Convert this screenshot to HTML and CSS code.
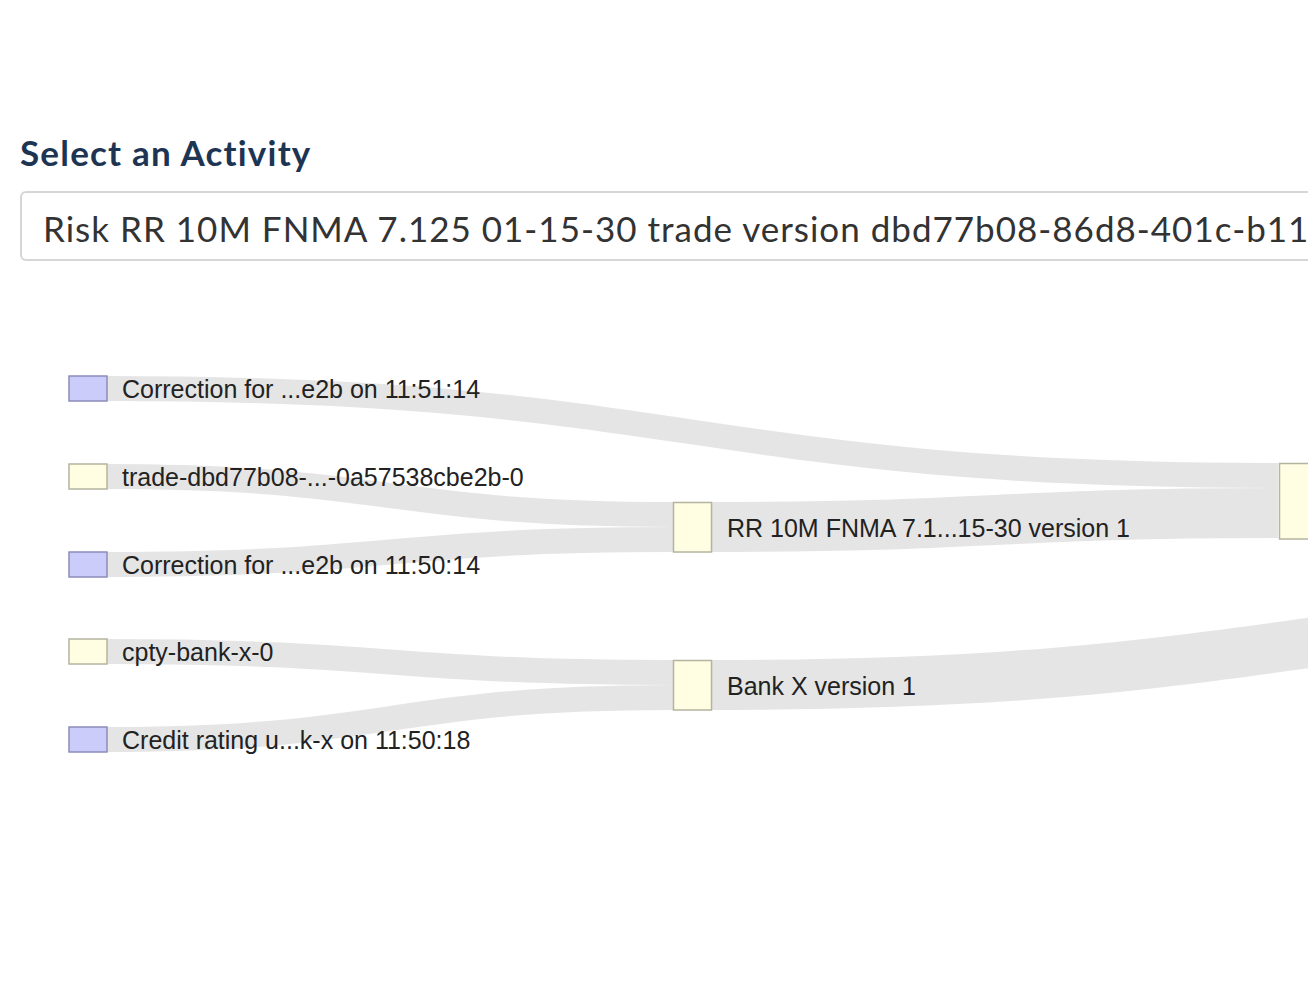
FILE: index.html
```html
<!DOCTYPE html>
<html>
<head>
<meta charset="utf-8">
<link rel="stylesheet" href="styles.css">
</head>
<body>
<div class="page">
  <h2 class="title">Select an Activity</h2>
  <div class="select">Risk RR 10M FNMA 7.125 01-15-30 trade version dbd77b08-86d8-401c-b11e-0a57538cbe2b</div>
  <svg class="chart" width="1308" height="681" viewBox="0 300 1308 681">
    <g class="links">
      <path d="M107,388.5 C692.5,388.5 692.5,475.5 1278,475.5" stroke-width="25"/>
      <path d="M107,476.5 C390,476.5 390,514.5 673,514.5" stroke-width="25"/>
      <path d="M107,564.5 C390,564.5 390,539.5 673,539.5" stroke-width="25"/>
      <path d="M712,527 C995,527 995,513 1278,513" stroke-width="50"/>
      <path d="M107,651.5 C390,651.5 390,672.5 673,672.5" stroke-width="25"/>
      <path d="M107,739.5 C390,739.5 390,697.5 673,697.5" stroke-width="25"/>
      <path d="M712,685 C1297,685 1297,604 1882,604" stroke-width="50"/>
    </g>
    <g class="nodes">
      <rect class="n-blue" x="69" y="376" width="38" height="25"/>
      <rect class="n-yellow" x="69" y="464" width="38" height="25"/>
      <rect class="n-blue" x="69" y="552" width="38" height="25"/>
      <rect class="n-yellow" x="69" y="639" width="38" height="25"/>
      <rect class="n-blue" x="69" y="727" width="38" height="25"/>
      <rect class="n-yellow" x="673.5" y="502.5" width="38" height="49.5"/>
      <rect class="n-yellow" x="673.5" y="660.5" width="38" height="49.5"/>
      <rect class="n-yellow" x="1279.5" y="463.5" width="40" height="75.5"/>
    </g>
    <g class="labels">
      <text x="122" y="398">Correction for ...e2b on 11:51:14</text>
      <text x="122" y="486">trade-dbd77b08-...-0a57538cbe2b-0</text>
      <text x="122" y="574">Correction for ...e2b on 11:50:14</text>
      <text x="122" y="661">cpty-bank-x-0</text>
      <text x="122" y="749">Credit rating u...k-x on 11:50:18</text>
      <text x="727" y="537">RR 10M FNMA 7.1...15-30 version 1</text>
      <text x="727" y="695">Bank X version 1</text>
    </g>
  </svg>
</div>
</body>
</html>
```

FILE: styles.css
```css
html, body {
  margin: 0;
  padding: 0;
  overflow: hidden;
  background: #ffffff;
}

.page {
  width: 1308px;
  height: 981px;
  overflow: hidden;
  padding-top: 131px;
  box-sizing: border-box;
}

.title {
  margin: 0 0 18px 20px;
  font-family: Lato, "Open Sans", sans-serif;
  font-weight: 700;
  font-size: 35px;
  letter-spacing: 1.2px;
  line-height: 42px;
  color: #1d3553;
}

.select {
  margin-left: 20px;
  width: 1400px;
  height: 70px;
  box-sizing: border-box;
  border: 2px solid #d6d6d6;
  border-radius: 6px;
  padding-left: 21px;
  padding-top: 3px;
  display: flex;
  align-items: center;
  white-space: nowrap;
  overflow: hidden;
  font-family: Lato, "Open Sans", sans-serif;
  font-size: 35px;
  letter-spacing: 1px;
  color: #333333;
}

.chart {
  display: block;
  margin-top: 39px;
}

.links path {
  fill: none;
  stroke: #000000;
  stroke-opacity: 0.1;
}

.n-blue {
  fill: #ccccfa;
  stroke: #8c8cbc;
  stroke-width: 1.5;
}

.n-yellow {
  fill: #fffde2;
  stroke: #b4b4a0;
  stroke-width: 1.5;
}

.labels text {
  font-family: "Liberation Sans", Arial, sans-serif;
  font-size: 25px;
  fill: #222222;
}
```
